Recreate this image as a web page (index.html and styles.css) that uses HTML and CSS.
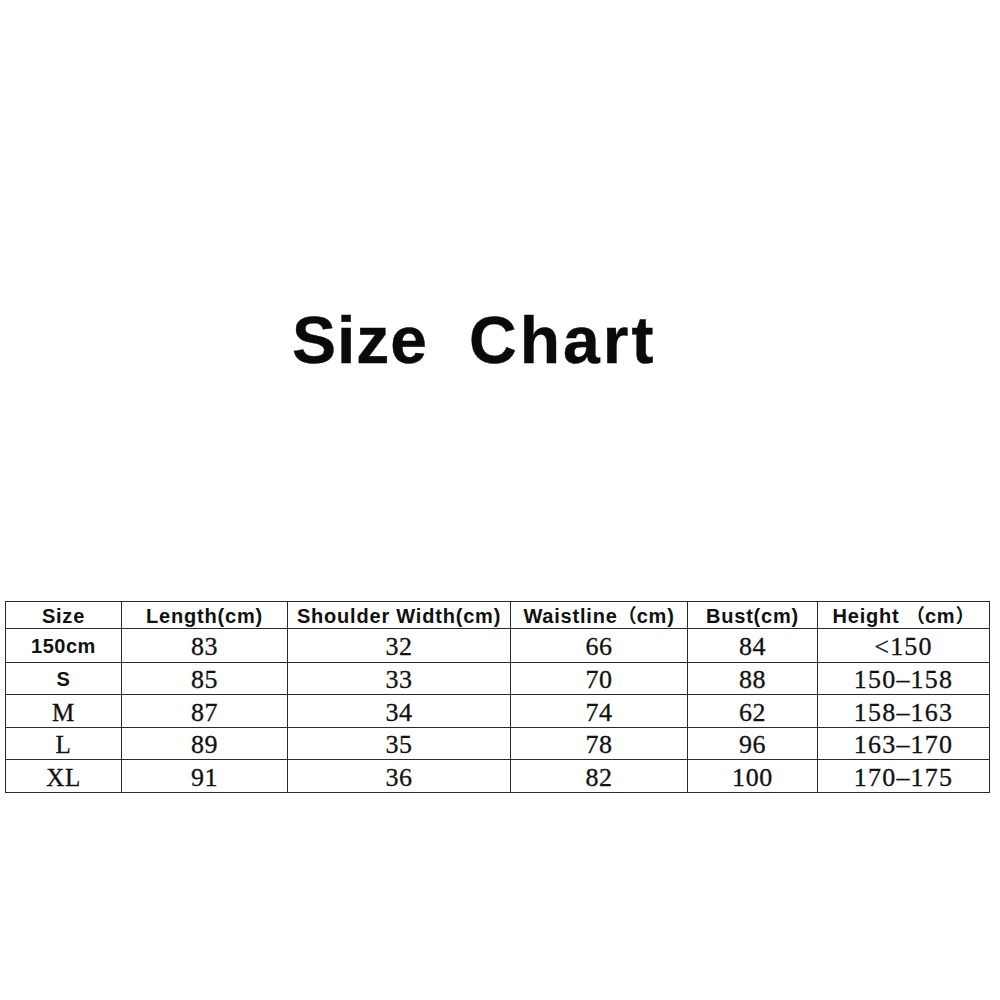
FILE: index.html
```html
<!DOCTYPE html>
<html lang="en">
<head>
<meta charset="utf-8">
<title>Size Chart</title>
<link rel="stylesheet" href="styles.css">
</head>
<body>
<div class="page">
  <h1 class="title"><span class="word word-size">Size</span><span class="word word-chart">Chart</span></h1>
  <table class="chart">
    <colgroup>
      <col class="c1"><col class="c2"><col class="c3"><col class="c4"><col class="c5"><col class="c6">
    </colgroup>
    <thead>
      <tr class="head">
        <th>Size</th>
        <th>Length(cm)</th>
        <th>Shoulder Width(cm)</th>
        <th>Waistline<span class="cjk">（</span>cm)</th>
        <th>Bust(cm)</th>
        <th>Height <span class="cjk">（</span>cm<span class="cjk">）</span></th>
      </tr>
    </thead>
    <tbody>
      <tr class="r1"><td class="sz sans">150cm</td><td>83</td><td>32</td><td>66</td><td>84</td><td>&lt;150</td></tr>
      <tr class="r2"><td class="sz sans">S</td><td>85</td><td>33</td><td>70</td><td>88</td><td>150–158</td></tr>
      <tr class="r3"><td class="sz serif">M</td><td>87</td><td>34</td><td>74</td><td>62</td><td>158–163</td></tr>
      <tr class="r4"><td class="sz serif">L</td><td>89</td><td>35</td><td>78</td><td>96</td><td>163–170</td></tr>
      <tr class="r5"><td class="sz serif">XL</td><td>91</td><td>36</td><td>82</td><td>100</td><td>170–175</td></tr>
    </tbody>
  </table>
</div>
</body>
</html>
```
FILE: styles.css
```css
html, body {
  margin: 0;
  padding: 0;
  background: #ffffff;
}

.page {
  width: 1000px;
  height: 1000px;
  padding-top: 307px;
  box-sizing: border-box;
  display: flex;
  flex-direction: column;
  align-items: flex-start;
}

.title {
  margin: 0 0 0 292px;
  display: flex;
  gap: 41px;
  font-family: "Liberation Sans", Arial, sans-serif;
  font-weight: bold;
  font-size: 66px;
  line-height: 66px;
  color: #0a0a0a;
  -webkit-text-stroke: 0.4px #0a0a0a;
}

.word-size {
  letter-spacing: 1px;
}

.word-chart {
  letter-spacing: 3px;
}

.chart {
  margin: 228px 0 0 5px;
  border-collapse: collapse;
  table-layout: fixed;
  width: 984px;
  color: #111111;
}

.c1 { width: 116px; }
.c2 { width: 166px; }
.c3 { width: 223px; }
.c4 { width: 177px; }
.c5 { width: 130px; }
.c6 { width: 172px; }

.chart th,
.chart td {
  border: 1px solid #2b2b2b;
  padding: 0;
  text-align: center;
  vertical-align: middle;
  white-space: nowrap;
}

.chart th {
  font-family: "Liberation Sans", Arial, sans-serif;
  font-weight: bold;
  font-size: 20px;
  letter-spacing: 0.8px;
  line-height: 20px;
  padding-top: 2px;
}

.cjk {
  font-family: "Noto Sans CJK SC", sans-serif;
  font-weight: bold;
  font-size: 19px;
  line-height: 18px;
  letter-spacing: 0;
}

.chart td {
  font-family: "Liberation Serif", "Times New Roman", serif;
  font-size: 26px;
  line-height: 26px;
  letter-spacing: 0.6px;
  padding-top: 3px;
  -webkit-text-stroke: 0.3px #111111;
}

.chart td.sans {
  font-family: "Liberation Sans", Arial, sans-serif;
  font-weight: bold;
  font-size: 20px;
  letter-spacing: 0.5px;
  padding-top: 0;
  -webkit-text-stroke: 0;
}

.chart td.serif {
  font-family: "Liberation Serif", "Times New Roman", serif;
  font-size: 25px;
}

.chart tr td:last-child {
  letter-spacing: 1.2px;
}

.head { height: 27px; }
.r1 { height: 34px; }
.r2 { height: 32px; }
.r3 { height: 33px; }
.r4 { height: 32px; }
.r5 { height: 33px; }
```
